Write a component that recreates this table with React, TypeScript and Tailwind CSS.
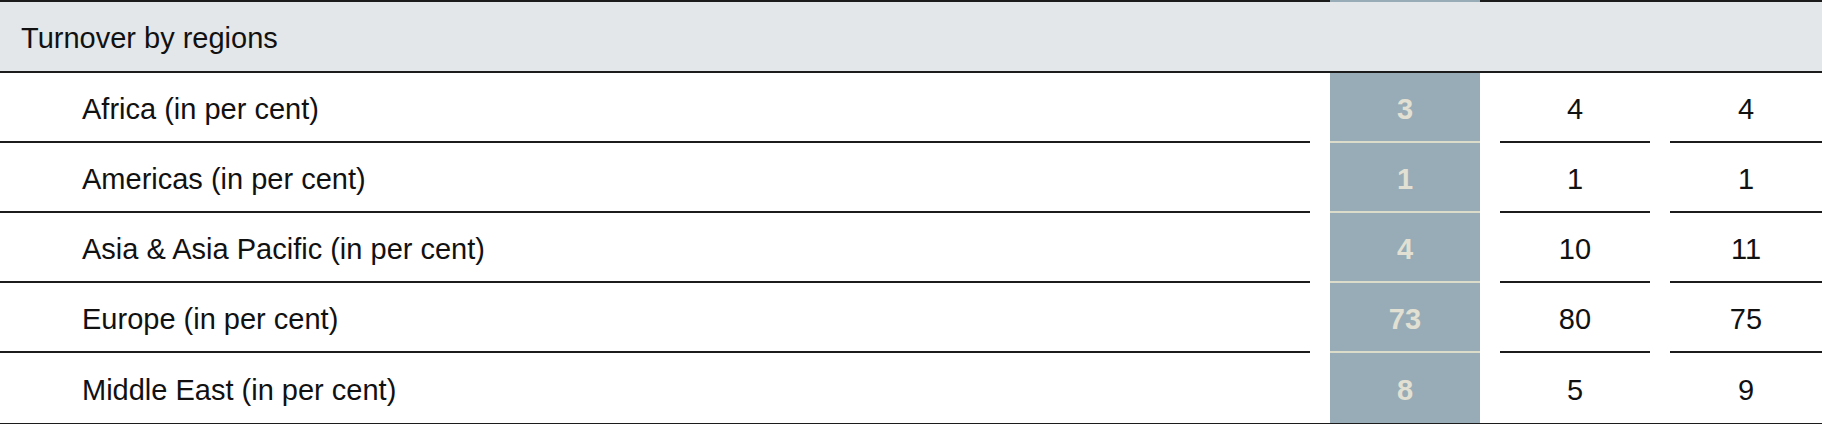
import React from "react";

const rows = [
  { label: "Africa (in per cent)", values: ["3", "4", "4"] },
  { label: "Americas (in per cent)", values: ["1", "1", "1"] },
  { label: "Asia & Asia Pacific (in per cent)", values: ["4", "10", "11"] },
  { label: "Europe (in per cent)", values: ["73", "80", "75"] },
  { label: "Middle East (in per cent)", values: ["8", "5", "9"] },
];

export default function App() {
  return (
    <div
      className="w-[1822px] h-[424px] bg-white text-[#111] text-[29px] leading-none"
      style={{ fontFamily: '"Liberation Sans", Arial, sans-serif' }}
    >
      {/* header */}
      <div className="grid grid-cols-[1310px_150px_150px_1fr] gap-x-5 h-[73px] bg-[#e3e7ea] border-t-2 border-b-2 border-[#1c1c1c]">
        <div className="flex items-center pl-[21px] pt-[3px]">Turnover by regions</div>
        <div className="-mt-[2px] border-t-2 border-[#97acb6]" />
        <div />
        <div />
      </div>

      {/* body */}
      <div className="border-b-2 border-[#1c1c1c]">
        {rows.map((row, i) => {
          const last = i === rows.length - 1;
          return (
            <div
              key={row.label}
              className="grid grid-cols-[1310px_150px_150px_1fr] gap-x-5 h-[70px]"
            >
              <div
                className={`flex items-center pl-[82px] pt-[4px] ${
                  last ? "" : "border-b-2 border-[#1c1c1c]"
                }`}
              >
                {row.label}
              </div>
              <div
                className={`flex items-center justify-center pt-[4px] bg-[#97acb6] text-[#e2e0d2] font-bold ${
                  last ? "" : "border-b-2 border-[#dcdccb]"
                }`}
              >
                {row.values[0]}
              </div>
              <div
                className={`flex items-center justify-center pt-[4px] ${
                  last ? "" : "border-b-2 border-[#1c1c1c]"
                }`}
              >
                {row.values[1]}
              </div>
              <div
                className={`flex items-center justify-center pt-[4px] ${
                  last ? "" : "border-b-2 border-[#1c1c1c]"
                }`}
              >
                {row.values[2]}
              </div>
            </div>
          );
        })}
      </div>
    </div>
  );
}
